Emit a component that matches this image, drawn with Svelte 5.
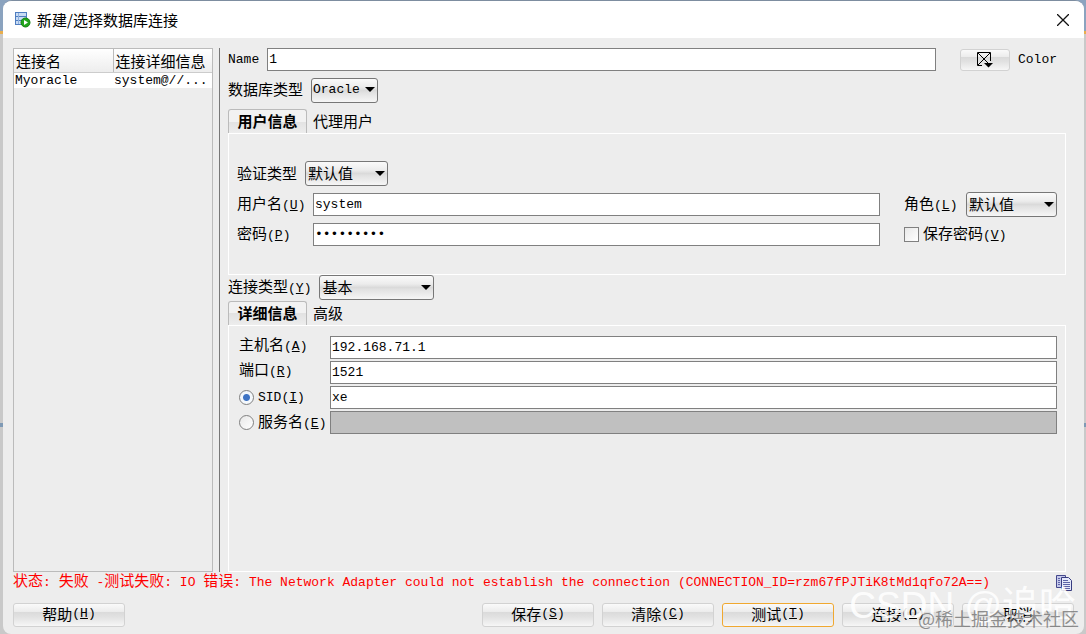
<script lang="ts">
	interface Field {
		id: string;
		label: string;
		key: string;
		value: string;
		radio?: boolean;
		disabled?: boolean;
	}

	const connections = [{ name: 'Myoracle', detail: 'system@//...' }];

	const details: Field[] = [
		{ id: 'host', label: '主机名', key: 'A', value: '192.168.71.1' },
		{ id: 'port', label: '端口', key: 'R', value: '1521' },
		{ id: 'sid', label: 'SID', key: 'I', value: 'xe', radio: true },
		{ id: 'service', label: '服务名', key: 'E', value: '', radio: true, disabled: true }
	];

	const actions = [
		{ label: '保存', key: 'S' },
		{ label: '清除', key: 'C' },
		{ label: '测试', key: 'T', focus: true },
		{ label: '连接', key: 'O' },
		{ label: '取消', key: '' }
	];

	let target = $state('sid');
</script>

<!-- mnemonic suffix, e.g. (U) -->
{#snippet hint(key: string)}
	<span class="latin">(<u>{key}</u>)</span>
{/snippet}

<main class="dialog">
	<header class="titlebar">
		<svg width="16" height="16" viewBox="0 0 16 16" aria-hidden="true">
			<rect x="0.5" y="0.5" width="11" height="12" fill="#c9dcf4" stroke="#4f7dc0" />
			<path d="M1 4.500h11M1 8.500h11" stroke="#4f7dc0" />
			<path d="M3.500 1v11" stroke="#8fb0dd" />
			<circle cx="10.5" cy="10.500" r="4.500" fill="#22a51c" stroke="#128010" />
			<path d="M9 8l4 2.500L9 13z" fill="#fff" />
		</svg>
		<h1>新建/选择数据库连接</h1>
		<button class="close" aria-label="关闭">
			<svg width="12" height="12" viewBox="0 0 12 12"><path d="M0 0l12 12M12 0L0 12" stroke="#111" stroke-width="1.3" /></svg>
		</button>
	</header>

	<div class="body">
		<div class="list">
			<table>
				<thead>
					<tr><th>连接名</th><th>连接详细信息</th></tr>
				</thead>
				<tbody>
					{#each connections as c (c.name)}
						<tr class="latin"><td>{c.name}</td><td>{c.detail}</td></tr>
					{/each}
				</tbody>
			</table>
		</div>

		<form class="form">
			<div class="row name">
				<label class="latin" for="name">Name</label>
				<input id="name" type="text" value="1" />
				<button type="button" id="color" class="btn swatch" aria-label="Color">
					<svg width="17" height="17" viewBox="0 0 17 17">
						<path d="M6 14.500H1.500v-13h13V10M2 2l12 12M14 2L2 14" fill="none" stroke="#000" />
						<path d="M8 12h9l-4.500 4.500z" />
					</svg>
				</button>
				<label class="latin" for="color">Color</label>
			</div>

			<div class="row db">
				<label for="db">数据库类型</label>
				<span class="select db-select"><select id="db" class="latin"><option>Oracle</option></select></span>
			</div>

			<div class="tabs" role="tablist">
				<button type="button" class="tab active" role="tab" aria-selected="true">用户信息</button>
				<button type="button" class="tab" role="tab" aria-selected="false">代理用户</button>
			</div>
			<section class="panel user">
				<div class="row">
					<label for="auth">验证类型</label>
					<span class="select auth-select"><select id="auth"><option>默认值</option></select></span>
				</div>
				<div class="credentials">
					<label for="user">用户名{@render hint('U')}</label>
					<input id="user" type="text" value="system" />
					<div class="row role">
						<label for="role">角色{@render hint('L')}</label>
						<span class="select role-select"><select id="role"><option>默认值</option></select></span>
					</div>
					<label for="password">密码{@render hint('P')}</label>
					<input id="password" type="password" value="oracle123" />
					<label class="row check"><input type="checkbox" /><span>保存密码{@render hint('V')}</span></label>
				</div>
			</section>

			<div class="row kind">
				<label for="kind">连接类型{@render hint('Y')}</label>
				<span class="select kind-select"><select id="kind"><option>基本</option></select></span>
			</div>

			<div class="tabs" role="tablist">
				<button type="button" class="tab active" role="tab" aria-selected="true">详细信息</button>
				<button type="button" class="tab" role="tab" aria-selected="false">高级</button>
			</div>
			<section class="panel details">
				{#each details as f (f.id)}
					{#if f.radio}
						<label class="row radio">
							<input type="radio" name="target" value={f.id} bind:group={target} />
							<span class:latin={f.id === 'sid'}>{f.label}{@render hint(f.key)}</span>
						</label>
					{:else}
						<label class="plain" for={f.id}>{f.label}{@render hint(f.key)}</label>
					{/if}
					<input id={f.id} type="text" aria-label={f.label} value={f.value} disabled={f.disabled} />
				{/each}
			</section>
		</form>
	</div>

	<div class="status">
		<p class="latin"><span>状态</span>: <span>失败</span> -<span>测试失败</span>: IO <span>错误</span>: The Network Adapter could not establish the connection (CONNECTION_ID=rzm67fPJTiK8tMd1qfo72A==)</p>
		<button class="copy" aria-label="复制">
			<svg width="16" height="16" viewBox="0 0 16 16">
				<path d="M.5.5h9v12h-9z" fill="#c4c8ea" stroke="#44488c" />
				<path d="M5.500 2.500h7l3 3v10h-10z" fill="#e4e8fa" stroke="#383c80" />
				<path d="M2 3.500h2M2 5.500h2M2 7.500h2M2 9.500h2M7 5.500h5M7 7.500h7M7 9.500h7M7 11.500h7M7 13.500h7" stroke="#5d64a8" />
			</svg>
		</button>
	</div>

	<footer class="actions">
		<button class="btn help">帮助{@render hint('H')}</button>
		{#each actions as a (a.label)}
			<button class="btn" class:focus={a.focus}>{a.label}{#if a.key}{@render hint(a.key)}{/if}</button>
		{/each}
	</footer>

	<div class="mark mark-large">CSDN @追哈</div>
	<div class="mark mark-small">@稀土掘金技术社区</div>
</main>

<style>
	:global(body) {
		background: linear-gradient(#8ba3bf 0 31px, #e8ae4e 31px 34px, #c9c9c9 34px 423px, #7f9ab5 423px 427px, #c9c9c9 427px);
	}

	.dialog {
		position: relative;
		box-sizing: border-box;
		display: flex;
		flex-direction: column;
		min-height: 100vh;
		margin: 0 2px 0 3px;
		padding-bottom: 7px;
		border-top: 1px solid #7d8da0;
		border-radius: 9px 9px 8px 8px;
		overflow: hidden;
		background: #ededed;
		color: #000;
		font-size: 15px;
		line-height: 20px;
	}

	.dialog,
	button,
	input,
	select,
	label {
		font-family: 'Noto Sans CJK SC', sans-serif;
	}

	.latin,
	input,
	select.latin {
		font-family: 'Liberation Mono', 'Noto Sans CJK SC', monospace;
		font-size: 13px;
	}

	button,
	select {
		padding: 0;
		color: inherit;
		font-size: 15px;
		line-height: 20px;
	}

	label {
		white-space: nowrap;
	}

	.titlebar {
		display: flex;
		align-items: center;
		gap: 6px;
		height: 37px;
		padding: 0 15px 0 12px;
		background: #fff;
	}

	h1 {
		flex: 1;
		margin: 0;
		font-size: 15px;
		font-weight: 400;
	}

	.close,
	.copy {
		display: flex;
		border: 0;
		background: none;
	}

	.body {
		flex: 1;
		display: flex;
		padding: 10px 18px 0 10px;
	}

	.list {
		box-sizing: border-box;
		width: 200px;
		border: 1px solid #bbb;
	}

	table {
		width: 100%;
		table-layout: fixed;
		border-collapse: collapse;
	}

	th {
		padding: 0 2px;
		border-bottom: 1px solid #ccc;
		background: linear-gradient(#fff, #ededed);
		font-weight: 400;
		line-height: 23px;
		text-align: left;
		white-space: nowrap;
	}

	th + th {
		border-left: 1px solid #bbb;
	}

	td {
		padding: 0 1px;
		background: #fff;
		line-height: 15px;
	}

	.form {
		flex: 1;
		display: flex;
		flex-direction: column;
		margin-left: 6px;
		padding-left: 8px;
		border-left: 1px solid #777;
	}

	.row {
		display: flex;
		align-items: center;
		gap: 8px;
	}

	input[type='text'],
	input[type='password'] {
		box-sizing: border-box;
		width: 100%;
		min-width: 0;
		height: 23px;
		margin: 0;
		padding: 0 1px;
		border: 1px solid #808080;
		border-radius: 0;
		background: #fff;
		color: #000;
	}

	input:disabled {
		background: #c0c0c0 !important;
	}

	.name {
		padding-right: 9px;
	}

	.name input {
		flex: 1;
	}

	.btn {
		box-sizing: border-box;
		display: flex;
		align-items: center;
		justify-content: center;
		width: 112px;
		height: 24px;
		padding-bottom: 2px;
		border: 1px solid #d2d2d2;
		border-radius: 3px;
		background: linear-gradient(#fafafa, #ececec 35%, #dadada 36%, #e2e2e2 60%, #f6f6f6);
	}

	.swatch {
		width: 50px;
		height: 22px;
		margin-left: 16px;
		padding: 0;
	}

	.select {
		position: relative;
		display: block;
		height: 25px;
	}

	.select::after {
		content: '';
		position: absolute;
		top: 10px;
		right: 3px;
		border: 5px solid transparent;
		border-top-color: #000;
		border-bottom: 0;
		pointer-events: none;
	}

	select {
		appearance: none;
		box-sizing: border-box;
		width: 100%;
		height: 25px;
		padding: 0 2px 2px;
		border: 1px solid #777;
		border-radius: 3px;
		background: linear-gradient(#fafafa, #ececec 35%, #dadada 50%, #e2e2e2 60%, #f6f6f6);
	}

	select.latin {
		padding: 0 1px;
	}

	.db {
		margin: 6px 0 7px;
	}

	.db label,
	.user > .row label {
		padding-bottom: 2px;
	}

	.db-select {
		width: 67px;
	}

	.auth-select {
		width: 83px;
	}

	.role-select {
		width: 91px;
	}

	.kind-select {
		width: 115px;
	}

	.tabs {
		display: flex;
		gap: 6px;
		height: 24px;
	}

	.tab {
		border: 0;
		background: none;
	}

	.tab.active {
		box-sizing: border-box;
		width: 79px;
		padding-bottom: 1px;
		border: 1px solid #bbb;
		border-bottom: 0;
		border-radius: 3px 3px 0 0;
		background: linear-gradient(#f2f2f2 50%, #e2e2e2 50%, #ededed);
		font-weight: 700;
	}

	.panel {
		box-sizing: border-box;
		border: 1px solid #fff;
	}

	.user {
		height: 142px;
		padding: 27px 8px 0;
	}

	.credentials {
		display: grid;
		grid-template-columns: 68px 1fr 153px;
		grid-auto-rows: 25px;
		align-items: center;
		gap: 5px 8px;
		margin-top: 6px;
	}

	.credentials {
		grid-template-columns: 68px 1fr 169px;
	}

	.role,
	.check {
		margin-left: 16px;
	}

	.role {
		justify-content: space-between;
	}

	.check {
		gap: 4px;
	}

	input[type='checkbox'],
	input[type='radio'] {
		appearance: none;
		box-sizing: border-box;
		flex: none;
		width: 15px;
		height: 15px;
		margin: 0;
		border: 1px solid #808080;
		background: linear-gradient(135deg, #e8e8e8, #fff);
	}

	input[type='radio'] {
		border-radius: 50%;
	}

	input[type='radio']:checked {
		background: radial-gradient(circle, #3f74c4 0 3px, #f4f8fc 4px);
	}

	.kind {
		margin-bottom: 1px;
	}

	.details {
		flex: 1;
		display: grid;
		grid-template-columns: 85px 1fr;
		grid-auto-rows: 23px;
		align-content: start;
		align-items: center;
		gap: 2px 6px;
		padding: 10px 8px 0 10px;
	}

	.plain {
		padding-bottom: 5px;
	}

	.radio {
		gap: 4px;
	}

	.status {
		display: flex;
		align-items: center;
		justify-content: space-between;
		height: 22px;
		padding: 0 12px 0 10px;
		color: #f00;
	}

	.status p {
		margin: 0;
	}

	.status span {
		font-size: 15px;
	}

	.actions {
		display: flex;
		gap: 8px;
		padding: 9px 10px 0;
	}

	.help {
		margin-right: auto;
	}

	.focus {
		border-color: #f0a830;
	}

	.mark {
		position: absolute;
		right: 5px;
		bottom: 4px;
		white-space: nowrap;
		pointer-events: none;
	}

	.mark-large {
		right: 8px;
		color: rgb(255 255 255 / 90%);
		font-family: 'Liberation Sans', 'Noto Sans CJK SC', sans-serif;
		font-size: 37px;
		line-height: 48px;
	}

	.mark-small {
		color: rgb(110 110 110 / 75%);
		font-size: 18px;
		line-height: 24px;
	}
</style>
